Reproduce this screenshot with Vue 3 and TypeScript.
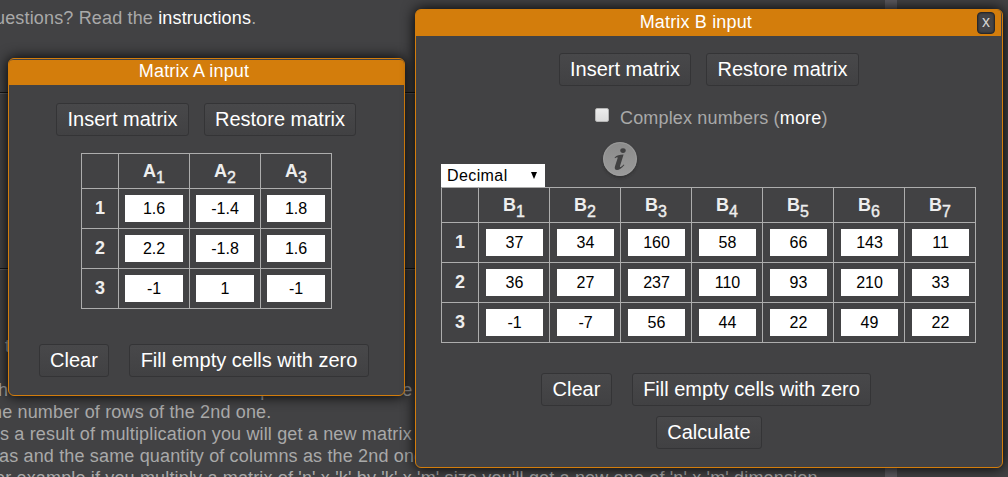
<script setup lang="ts">
interface MatrixData {
  name: string
  rows: string[][]
}

const matrixA: MatrixData = {
  name: 'A',
  rows: [
    ['1.6', '-1.4', '1.8'],
    ['2.2', '-1.8', '1.6'],
    ['-1', '1', '-1'],
  ],
}

const matrixB: MatrixData = {
  name: 'B',
  rows: [
    ['37', '34', '160', '58', '66', '143', '11'],
    ['36', '27', '237', '110', '93', '210', '33'],
    ['-1', '-7', '56', '44', '22', '49', '22'],
  ],
}
</script>

<template>
  <div class="page">
    <main class="content">
      <section class="intro">
        <p class="intro-text">uestions? Read the <a>instructions</a>.</p>
      </section>
      <section class="form-area"></section>
      <section class="article">
        <p class="stub">t</p>
        <p class="line split"><span>h</span><span class="tail">p</span><span>e</span></p>
        <p class="line l2">he number of rows of the 2nd one.</p>
        <p class="line l3">s a result of multiplication you will get a new matrix</p>
        <p class="line l4">as and the same quantity of columns as the 2nd one</p>
        <p class="line l5">or example if you multiply a matrix of 'n' x 'k' by 'k' x 'm' size you'll get a new one of 'n' x 'm' dimension.</p>
      </section>
    </main>
    <div class="divider"></div>
    <aside class="side"></aside>

    <div class="dialog dialog-a">
      <header class="title"><span>Matrix A input</span></header>
      <div class="row top-row">
        <button class="btn w133">Insert matrix</button>
        <button class="btn w152">Restore matrix</button>
      </div>
      <div class="matrix cols3">
        <div class="head"></div>
        <div v-for="c in 3" :key="c" class="head">{{ matrixA.name }}<sub>{{ c }}</sub></div>
        <template v-for="(row, r) in matrixA.rows" :key="r">
          <div class="head num">{{ r + 1 }}</div>
          <div v-for="(v, c) in row" :key="c" class="cell"><input :value="v" /></div>
        </template>
      </div>
      <div class="row bottom-row">
        <button class="btn w70">Clear</button>
        <button class="btn w240">Fill empty cells with zero</button>
      </div>
    </div>

    <div class="dialog dialog-b">
      <header class="title"><span>Matrix B input</span><button class="close">x</button></header>
      <div class="row top-row">
        <button class="btn w132">Insert matrix</button>
        <button class="btn w153">Restore matrix</button>
      </div>
      <label class="complex">
        <span class="check"></span>
        <span>Complex numbers (<a>more</a>)</span>
      </label>
      <div class="tools">
        <div class="select"><span>Decimal</span><span class="arrow"></span></div>
        <svg class="info" width="42" height="44" viewBox="0 0 42 44">
          <defs>
            <linearGradient id="disc" x1="0" y1="0" x2="0" y2="1">
              <stop offset="0" stop-color="#8b8b8b" />
              <stop offset="1" stop-color="#9a9a9a" />
            </linearGradient>
            <filter id="soft" x="-20%" y="-20%" width="140%" height="150%">
              <feGaussianBlur stdDeviation="1.6" />
            </filter>
          </defs>
          <circle cx="21" cy="22" r="16.6" fill="#252525" opacity="0.65" filter="url(#soft)" />
          <circle cx="21" cy="20" r="17" fill="url(#disc)" />
          <circle cx="21" cy="20" r="16.4" fill="none" stroke="#a2a2a2" stroke-width="1" opacity="0.6" />
          <ellipse cx="24" cy="11.6" rx="2.7" ry="2.4" fill="#414142" />
          <path d="M15.6 18.4C17.6 16.6 20.6 15.7 24.6 15.6L21.1 26.8C20.6 28.6 21.3 28.7 24.7 25.4L25.4 26.1C22.6 29.7 20.1 31 18.1 31C15.9 31 15.3 29.5 16 27.2L18.5 19.6C19 17.9 18 18 16 19.2Z" fill="#414142" />
        </svg>
      </div>
      <div class="matrix cols7">
        <div class="head"></div>
        <div v-for="c in 7" :key="c" class="head">{{ matrixB.name }}<sub>{{ c }}</sub></div>
        <template v-for="(row, r) in matrixB.rows" :key="r">
          <div class="head num">{{ r + 1 }}</div>
          <div v-for="(v, c) in row" :key="c" class="cell"><input :value="v" /></div>
        </template>
      </div>
      <div class="row bottom-row">
        <button class="btn w71">Clear</button>
        <button class="btn w239">Fill empty cells with zero</button>
      </div>
      <div class="row calc-row">
        <button class="btn w106">Calculate</button>
      </div>
    </div>
  </div>
</template>

<style>
html,
body {
  margin: 0;
  background: #424244;
  overflow: hidden;
}
</style>

<style scoped>
.page {
  position: relative;
  display: flex;
  width: 1008px;
  height: 477px;
  overflow: hidden;
  background: #424244;
  color: #a9a9a9;
  font-family: "Liberation Sans", Arial, sans-serif;
  font-size: 18px;
  letter-spacing: 0.16px;
}
.page * {
  box-sizing: border-box;
}
p {
  margin: 0;
}
a {
  color: #fff;
}
.content {
  width: 885px;
  height: 477px;
  overflow: hidden;
}
.divider {
  width: 12px;
  background: #5c5a5f;
}
.side {
  flex: 1;
}
.intro {
  height: 93px;
  padding-top: 7px;
  border-bottom: 1px solid #151515;
}
.intro-text {
  margin-left: -5px;
  line-height: 22px;
  white-space: nowrap;
}
.form-area {
  height: 176px;
  border-top: 1px solid #59595b;
  border-bottom: 1px solid #151515;
}
.article {
  border-top: 1px solid #59595b;
}
.stub {
  height: 44px;
  margin-top: 65px;
  padding-left: 5px;
  line-height: 22px;
}
.line {
  height: 22px;
  line-height: 22px;
  white-space: nowrap;
}
.split {
  display: flex;
  justify-content: flex-start;
  margin-left: -2px;
}
.tail {
  margin: 0 132px 0 252px;
}
.l2 {
  margin-left: -8px;
}
.l4 {
  margin-left: -1px;
}
.l5 {
  margin-left: -5px;
}
.dialog {
  position: absolute;
  display: flex;
  flex-direction: column;
  align-items: center;
  border: 1px solid #d37d0c;
  border-radius: 6px;
  background: #424244;
  box-shadow: 0 0 14px #000;
}
.dialog-a {
  left: 8px;
  top: 58px;
  width: 397px;
  height: 338px;
}
.dialog-b {
  left: 415px;
  top: 9px;
  width: 588px;
  height: 459px;
}
.title {
  display: flex;
  align-items: center;
  justify-content: center;
  align-self: stretch;
  height: 25px;
  margin-top: 1px;
  border-radius: 4px 4px 0 0;
  background: #d37d0c;
  color: #fff;
  line-height: 20px;
}
.dialog-a .title {
  padding-right: 25px;
  padding-bottom: 3px;
}
.dialog-b .title {
  height: 26px;
  margin: 0 1px 0 0;
  padding: 0 6px 3px 0;
  justify-content: flex-end;
}
.dialog-b .title > span {
  margin-right: 225px;
}
.close {
  width: 18px;
  height: 22px;
  margin-top: 3px;
  padding: 0 0 3px;
  border: 1px solid #28282b;
  border-radius: 4px;
  background: #444447;
  box-shadow: inset 0 0 2px #1c1c1c;
  color: #d4d4d4;
  font: 16px/17px "Liberation Sans", Arial, sans-serif;
}
.row {
  display: flex;
}
.dialog-a .top-row {
  gap: 15px;
  margin: 18px 0 17px;
  padding-right: 1px;
}
.dialog-b .top-row {
  gap: 15px;
  margin-top: 17px;
}
.btn {
  height: 33px;
  padding: 0;
  border: 1px solid #343436;
  border-radius: 3px;
  background: linear-gradient(#48484a, #414143);
  color: #fff;
  font: 20px/31px "Liberation Sans", Arial, sans-serif;
  letter-spacing: 0;
  white-space: nowrap;
}
.w70 { width: 70px; }
.w71 { width: 71px; }
.w106 { width: 106px; }
.w132 { width: 132px; }
.w133 { width: 133px; }
.w152 { width: 152px; }
.w153 { width: 153px; }
.w239 { width: 239px; }
.w240 { width: 240px; }
.matrix {
  display: grid;
  gap: 1px;
  padding: 1px;
  background: #adadad;
  letter-spacing: 0;
}
.cols3 {
  grid-template: 34px repeat(3, 39px) / 36px repeat(3, 70px);
}
.cols7 {
  grid-template: 34px repeat(3, 39px) / 36px repeat(7, 70px);
}
.head {
  background: #424244;
  color: #eee;
  font-weight: bold;
  line-height: 34px;
  text-align: center;
}
.num {
  line-height: 38px;
}
sub {
  position: relative;
  top: 1px;
  font-size: 16px;
  font-weight: normal;
  line-height: 0;
  -webkit-text-stroke: 0.4px #eee;
}
.cell {
  padding: 6px;
  background: #424244;
}
.cols7 .cell {
  padding-left: 7px;
}
input {
  display: block;
  width: 100%;
  height: 27px;
  padding: 0;
  border: 0;
  outline: 0;
  background: #fff;
  color: #000;
  font: 16px "Liberation Sans", Arial, sans-serif;
  text-align: center;
}
.dialog-a .bottom-row {
  gap: 20px;
  margin-top: 35px;
  padding-right: 5px;
}
.complex {
  display: flex;
  align-self: flex-start;
  gap: 11px;
  margin: 21px 0 0 179px;
  line-height: 22px;
}
.check {
  width: 14px;
  height: 14px;
  margin-top: 1px;
  border: 1px solid #b5b5b5;
  border-radius: 2px;
  background: linear-gradient(#ececec, #dcdcdc);
}
.tools {
  display: flex;
  align-self: stretch;
  align-items: flex-end;
  height: 58px;
  padding-left: 25px;
}
.select {
  display: flex;
  align-items: center;
  justify-content: space-between;
  width: 104px;
  height: 23px;
  padding: 0 8px 0 6px;
  background: #fff;
  color: #000;
  font-size: 16px;
  letter-spacing: 0.4px;
}
.arrow {
  width: 0;
  height: 0;
  border: 3.5px solid transparent;
  border-top: 7px solid #000;
  border-bottom: 0;
}
.info {
  margin: 0 0 4px 54px;
}
.dialog-b .matrix {
  align-self: flex-start;
  margin-left: 25px;
}
.dialog-b .bottom-row {
  gap: 20px;
  margin-top: 30px;
  padding-right: 6px;
}
.calc-row {
  margin-top: 10px;
}
</style>
